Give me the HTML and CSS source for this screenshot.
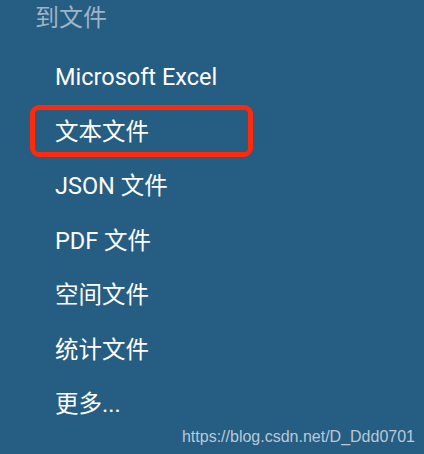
FILE: index.html
```html
<!DOCTYPE html>
<html>
<head>
<meta charset="utf-8">
<link rel="stylesheet" href="styles.css">
</head>
<body>
<div class="panel">
  <div class="title">到文件</div>
  <ul class="list">
    <li class="item">Microsoft Excel</li>
    <li class="item selected">文本文件</li>
    <li class="item">JSON 文件</li>
    <li class="item">PDF 文件</li>
    <li class="item">空间文件</li>
    <li class="item">统计文件</li>
    <li class="item">更多...</li>
  </ul>
  <div class="watermark">https://blog.csdn.net/D_Ddd0701</div>
</div>
</body>
</html>
```
FILE: styles.css
```css
html, body {
  margin: 0;
  padding: 0;
}
body {
  width: 424px;
  height: 454px;
  overflow: hidden;
  background: #265d82;
}
.panel {
  position: relative;
  width: 424px;
  height: 454px;
  font-family: Roboto, "Noto Sans CJK SC", sans-serif;
}
.title {
  padding-left: 35px;
  height: 36px;
  line-height: 36px;
  font-size: 24px;
  color: #9fb4c7;
}
.list {
  list-style: none;
  margin: 0;
  padding: 0;
  padding-top: 14px;
}
.item {
  height: 54.5px;
  line-height: 54.5px;
  padding-left: 55px;
  font-size: 23.5px;
  color: #ffffff;
}
.selected {
  position: relative;
}
.selected::before {
  content: "";
  position: absolute;
  left: 30px;
  top: 0;
  width: 213px;
  height: 42px;
  border: 5px solid #ff2a0a;
  border-radius: 9px;
}
.watermark {
  position: absolute;
  right: 9px;
  bottom: 8px;
  font-family: "Liberation Sans", Arial, sans-serif;
  font-size: 16px;
  color: #b9c9d7;
}
```
